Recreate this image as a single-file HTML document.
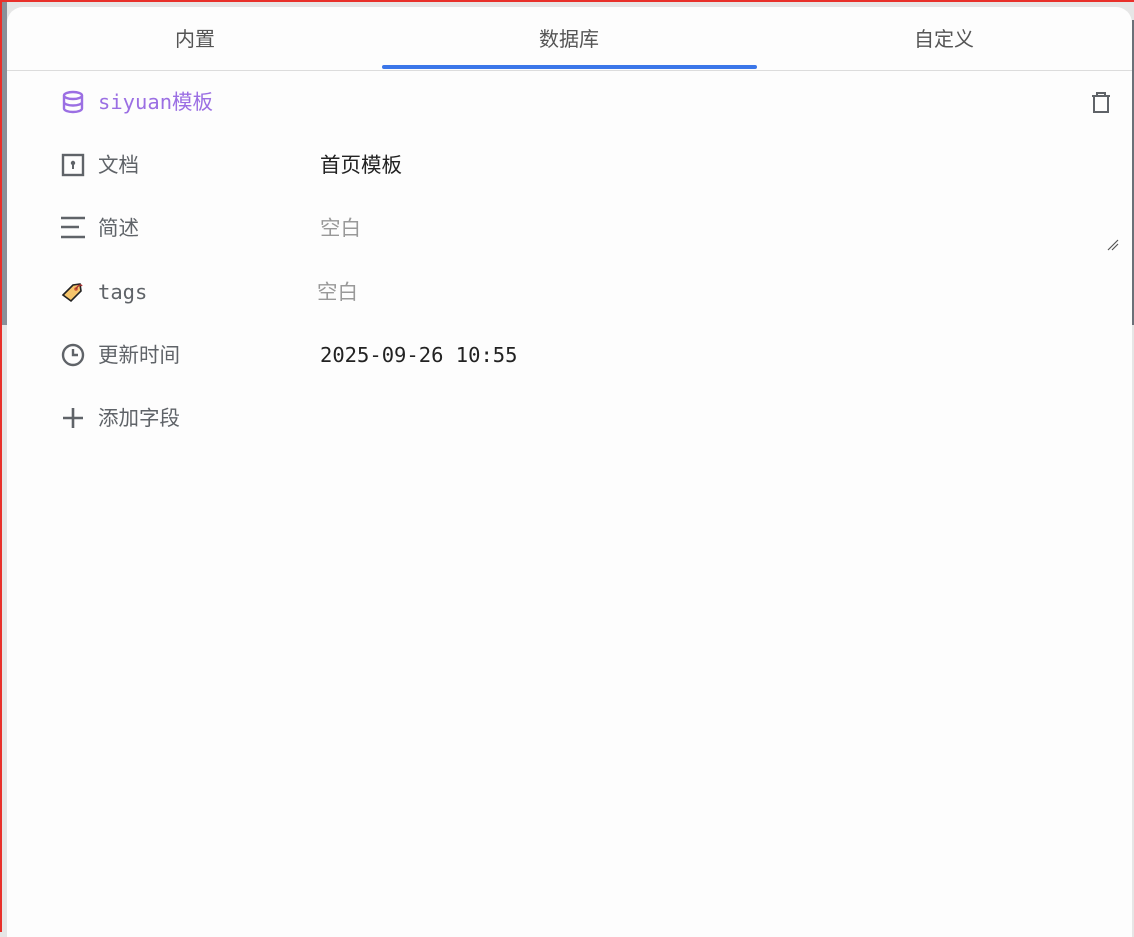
<!DOCTYPE html>
<html><head><meta charset="utf-8"><style>
body{margin:0;width:1134px;height:932px;background:#e6e6e6;position:relative;overflow:hidden;font-family:"DejaVu Sans Mono","Noto Sans CJK SC",monospace;}
.top{position:absolute;left:0;top:0;width:1134px;height:2px;background:#e8302a}
.left{position:absolute;left:0;top:0;width:2px;height:932px;background:#e8302a}
.lstrip{position:absolute;left:2px;top:2px;width:5px;height:323px;background:#8a9099}
.rstrip{position:absolute;right:0;top:20px;width:2px;height:305px;background:#6b7078}
.panel{position:absolute;left:7px;top:7px;width:1125px;height:930px;background:#fdfdfd;border-radius:16px 16px 0 0}
.tabs{position:absolute;left:0;top:0;width:1125px;height:63px;border-bottom:1px solid #dcdcdc}
.tab{position:absolute;top:16px;font-family:"Liberation Sans","Noto Sans CJK SC",sans-serif;font-size:20px;color:#555;transform:translateX(-50%)}
.ul{position:absolute;left:375px;top:58px;width:375px;height:4px;border-radius:2px;background:#3b76e9}
.row{position:absolute;left:54px;height:30px;line-height:30px;font-size:20.5px;color:#5f6368;display:flex;align-items:center}
.row svg{width:24px;height:24px;margin-right:13px;flex-shrink:0}
.val{position:absolute;font-size:20.5px;line-height:30px;font-family:"DejaVu Sans Mono","Noto Sans CJK SC",monospace}
</style></head><body>
<div class="top"></div><div class="left"></div><div class="lstrip"></div><div class="rstrip"></div>
<div class="panel">
<div class="tabs">
<div class="tab" style="left:188px">内置</div>
<div class="tab" style="left:562px">数据库</div>
<div class="tab" style="left:937px">自定义</div>
<div class="ul"></div>
</div>
<div class="row" style="top:80px;color:#9b6fe3"><svg viewBox="0 0 24 24" fill="none" stroke="#9b6fe3" stroke-width="2.4"><ellipse cx="12" cy="5.5" rx="9" ry="3.5"/><path d="M3 5.5v13c0 2 4 3.5 9 3.5s9-1.5 9-3.5v-13M3 12c0 2 4 3.5 9 3.5s9-1.5 9-3.5"/></svg>siyuan模板</div>
<svg style="position:absolute;left:1083px;top:84px" width="22" height="22" viewBox="0 0 22 22" fill="none" stroke="#5f6368" stroke-width="2"><path d="M2 5h18M7 5V2h8v3M4 5v16h14V5"/></svg>
<div class="row" style="top:143px"><svg viewBox="0 0 24 24" fill="none" stroke="#5f6368" stroke-width="2.4"><rect x="2" y="2" width="20" height="20"/><circle cx="12" cy="10" r="2.2" fill="#5f6368" stroke="none"/><path d="M12 11v5" stroke-width="2"/></svg>文档</div>
<div class="val" style="left:313px;top:143px;color:#222">首页模板</div>
<div class="row" style="top:206px"><svg viewBox="0 0 24 24" fill="none" stroke="#5f6368" stroke-width="2.4"><path d="M0 2h24M0 11h18M0 21h24"/></svg>简述</div>
<div class="val" style="left:313px;top:206px;color:#999">空白</div>
<svg style="position:absolute;left:1100px;top:232px" width="12" height="12" viewBox="0 0 12 12" stroke="#555" stroke-width="1.2"><path d="M1 11L11 1M5 11L11 5"/></svg>
<div class="row" style="top:270px"><svg viewBox="0 0 24 24"><path d="M2 15L12 5l7-1 1 7-10 10z" fill="#f6c56b" stroke="#222" stroke-width="1.6"/><circle cx="15" cy="9" r="1.8" fill="#c53"/><path d="M15 9c2-4 5-5 6-3" stroke="#a33" stroke-width="1.5" fill="none"/></svg>tags</div>
<div class="val" style="left:310px;top:270px;color:#999">空白</div>
<div class="row" style="top:333px"><svg viewBox="0 0 24 24" fill="none" stroke="#5f6368" stroke-width="2.4"><circle cx="12" cy="12" r="10"/><path d="M12 6v6h5"/></svg>更新时间</div>
<div class="val" style="left:313px;top:333px;color:#222">2025-09-26 10:55</div>
<div class="row" style="top:396px"><svg viewBox="0 0 24 24" fill="none" stroke="#5f6368" stroke-width="2.6"><path d="M12 2v20M2 12h20"/></svg>添加字段</div>
</div>
</body></html>
